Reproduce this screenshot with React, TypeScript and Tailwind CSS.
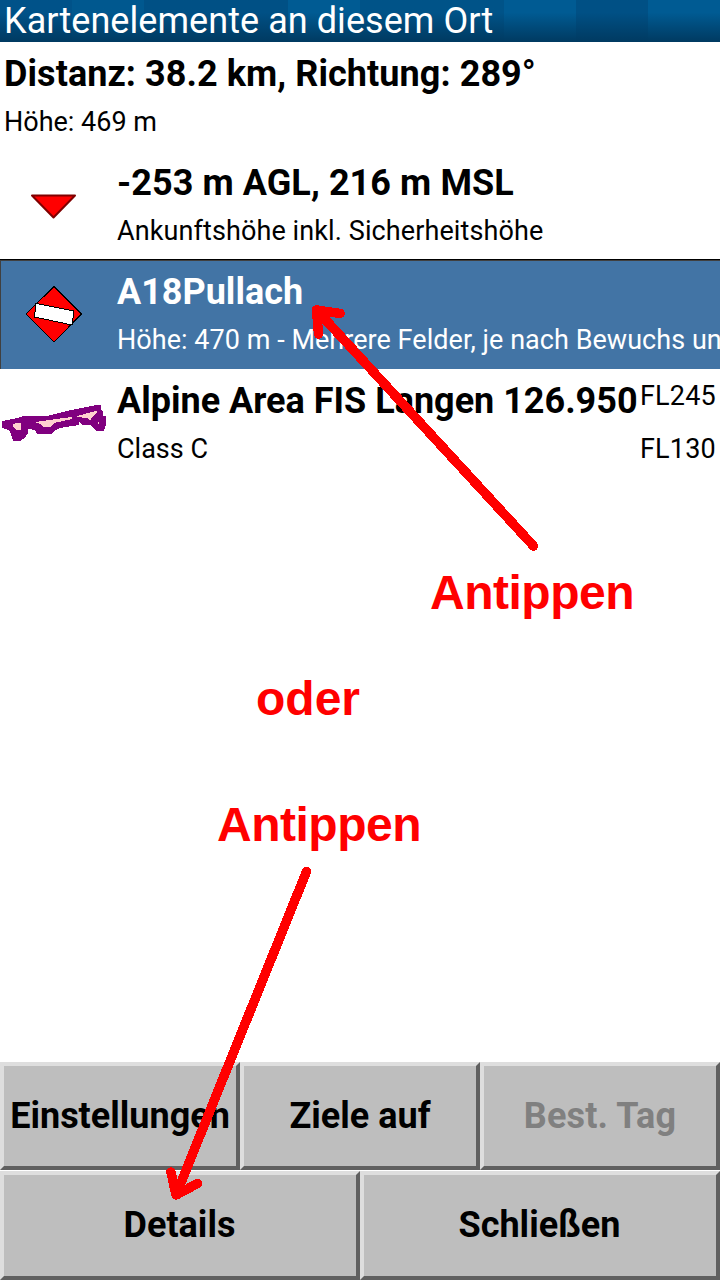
import React from "react";

const TILES = [
  "from-[#005289]",
  "from-[#00588f]",
  "from-[#005085]",
  "from-[#005085]",
  "from-[#005b93]",
  "from-[#005388]",
  "from-[#005388]",
  "from-[#005b93]",
  "from-[#005085]",
  "from-[#005b93]",
];

const BIG = "block whitespace-nowrap text-[36px] font-bold leading-[48px]";
const SMALL = "block whitespace-nowrap text-[27px] leading-[36px]";

function Key({ label, disabled, wide }: { label: string; disabled?: boolean; wide?: boolean }) {
  return (
    <button
      disabled={disabled}
      className={
        "flex min-w-0 flex-1 items-center justify-center whitespace-nowrap border-4 border-t-[#dedede] border-l-[#dedede] border-r-[#606060] border-b-[#606060] bg-[#bebebe] text-[36px] font-bold leading-[48px] " +
        (wide ? "h-[109px] pr-[1px] pb-[2px] " : "h-[108px] ") +
        (disabled ? "text-[#808080] tracking-[0.15px]" : "text-black")
      }
    >
      {label}
    </button>
  );
}

export default function App() {
  return (
    <div className="relative flex h-[1280px] w-[720px] flex-col overflow-hidden bg-white font-[Roboto,sans-serif] text-black">
      <header className="relative flex h-[42px] shrink-0">
        {TILES.map((t, i) => (
          <div key={i} className={"h-full w-[72px] bg-linear-to-b from-30% to-[#003a61] " + t} />
        ))}
        <h1 className="absolute top-0 left-[4px] whitespace-nowrap text-[36px] leading-[42px] tracking-[0.06px] text-white">
          Kartenelemente an diesem Ort
        </h1>
      </header>

      <section className="h-[109px] shrink-0 pt-[8px] pl-[4px]">
        <span className={BIG + " tracking-[0.07px]"}>Distanz: 38.2 km, Richtung: 289°</span>
        <span className={SMALL + " mt-[6px]"}>Höhe: 469 m</span>
      </section>

      <ul className="flex flex-col">
        <li className="flex h-[108px]">
          <svg className="h-[108px] w-[117px] shrink-0" viewBox="0 0 117 108">
            <path d="M32 44.5H75L53.5 66.5Z" fill="#ff0000" stroke="#800000" strokeWidth="2" strokeLinejoin="round" />
          </svg>
          <div className="pt-[8px]">
            <span className={BIG + " tracking-[0.08px]"}>-253 m AGL, 216 m MSL</span>
            <span className={SMALL + " mt-[6px] tracking-[0.1px]"}>Ankunftshöhe inkl. Sicherheitshöhe</span>
          </div>
        </li>
        <li className="flex h-[110px] border-t border-black bg-[#4274a5] text-white">
          <div className="flex h-[109px] w-[720px] border-t border-l border-[#404040]">
            <svg className="h-[108px] w-[116px] shrink-0" viewBox="1 261 116 108" shapeRendering="crispEdges">
              <path d="M54 286.5L81.5 314L54 342L26 314Z" fill="#ff0000" stroke="#000" />
              <path d="M36 303.5L74 311L72 325L34.500 317Z" fill="#fff" stroke="#000" />
            </svg>
            <div className="pt-[7px]">
              <span className={BIG}>A18Pullach</span>
              <span className={SMALL + " mt-[6px] tracking-[0.04px]"}>Höhe: 470 m - Mehrere Felder, je nach Bewuchs un</span>
            </div>
          </div>
        </li>
        <li className="flex h-[109px]">
          <svg className="h-[109px] w-[117px] shrink-0" viewBox="0 369 117 109" shapeRendering="crispEdges">
            <path d="M2 421L18 418L23 416H47L71 410L97 405H101V410L103 412V416H106V425L104 431H97L92 427L91 425H83L79 422V425L72 426L60 428L54 431L52 434H37L35 430L28 429V433L25 438L20 441H13L11 434L9 430L2 428Z" fill="#80007f" />
            <path d="M13 424L16 423H21V430H16L13 427ZM35 422L56 419L72 417V419L54 423L50 427H43L40 424ZM77 416L96 411L97 412L91 419L90 420L87 418L77 417ZM98 422H99V424H98Z" fill="#ffd0d0" />
          </svg>
          <div className="flex-1 pt-[8px]">
            <span className={BIG}>Alpine Area FIS Langen 126.950</span>
            <span className={SMALL + " mt-[6px]"}>Class C</span>
          </div>
          <div className="w-[80px] pt-[9px]">
            <span className={SMALL + " tracking-[0.2px]"}>FL245</span>
            <span className={SMALL + " mt-[17px] tracking-[0.2px]"}>FL130</span>
          </div>
        </li>
      </ul>

      <footer className="mt-auto shrink-0">
        <div className="flex">
          <Key label="Einstellungen" />
          <Key label="Ziele auf" />
          <Key label="Best. Tag" disabled />
        </div>
        <div className="flex pt-px">
          <Key label="Details" wide />
          <Key label="Schließen" wide />
        </div>
      </footer>

      <div className="absolute inset-0 font-['Liberation_Sans',sans-serif] text-[48px] leading-[56px] font-bold text-[#ff0000]">
        <svg className="absolute inset-0" width="720" height="1280" viewBox="0 0 720 1280" fill="none" stroke="#ff0000" strokeWidth="9.5" strokeLinecap="round" strokeLinejoin="round" shapeRendering="crispEdges">
          <path d="M533.500 546L316.500 310M340 313.500L316.500 310L318.500 334" />
          <path d="M306.500 871.500L176 1195M171 1172L176 1195L197.500 1183.500" />
        </svg>
        <span className="absolute top-[565px] left-[430px] tracking-[-0.5px]">Antippen</span>
        <span className="absolute top-[671px] left-[256px]">oder</span>
        <span className="absolute top-[797px] left-[217px] tracking-[-0.5px]">Antippen</span>
      </div>
    </div>
  );
}
